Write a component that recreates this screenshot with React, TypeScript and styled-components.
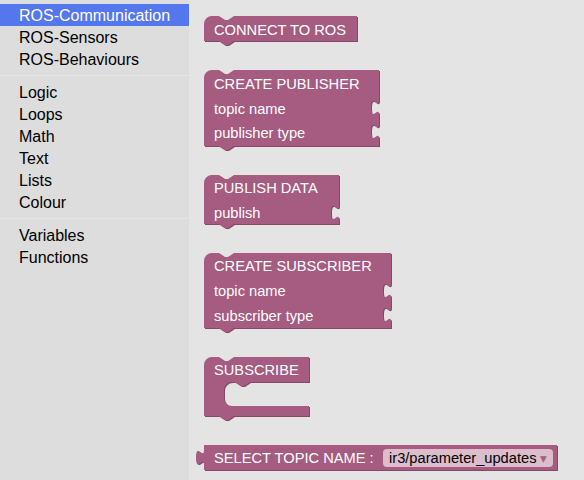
import React from 'react'
import styled, { createGlobalStyle } from 'styled-components'

const GlobalStyle = createGlobalStyle`
  html, body {
    margin: 0;
    padding: 0;
    background: #e4e4e4;
  }
  body {
    font-family: 'Liberation Sans', Arial, sans-serif;
  }
`

const BLOCK_COLOUR = '#a65b80'
const BLOCK_DARK = '#844966'

const Page = styled.div`
  display: flex;
  width: 584px;
  height: 480px;
  overflow: hidden;
`

const Toolbox = styled.div`
  width: 189px;
  flex-shrink: 0;
  background: #ddd;
  padding-top: 4px;
  box-sizing: border-box;
`

const TreeRow = styled.div<{ $selected?: boolean }>`
  height: 22px;
  line-height: 24px;
  overflow: hidden;
  padding-left: 19px;
  font-size: 16px;
  white-space: nowrap;
  color: ${(props) => (props.$selected ? '#fff' : '#000')};
  background: ${(props) => (props.$selected ? '#57e' : 'transparent')};
`

const Separator = styled.div`
  height: 0;
  margin: 5px 0;
  border-bottom: 1px solid #e5e5e5;
`

const Flyout = styled.div`
  flex: 1;
  display: flex;
  flex-direction: column;
  align-items: flex-start;
  gap: 29px;
  padding: 16px 0 0 15px;
  background: #e4e4e4;
`

const BlockSvg = styled.svg`
  display: block;
  overflow: visible;
`

const BodyPath = styled.path<{ $dark?: boolean }>`
  fill: ${(props) => (props.$dark ? BLOCK_DARK : BLOCK_COLOUR)};
`

const Label = styled.text`
  font-family: 'Liberation Sans', Arial, sans-serif;
  font-size: 11pt;
  fill: #fff;
`

const FieldRect = styled.rect`
  fill: #dbbdcc;
`

const FieldText = styled.text`
  font-family: 'Liberation Sans', Arial, sans-serif;
  font-size: 11pt;
  fill: #000;
`

const FieldArrow = styled.text`
  font-family: 'DejaVu Sans', sans-serif;
  font-size: 10pt;
  fill: ${BLOCK_COLOUR};
`

// statement block with value inputs cut into the right edge
const stackPath = (w: number, h: number, inputs: number[] = []) => {
  let d = `M 0,8 A 8,8 0 0,1 8,0 H 15 l 6,4 3,0 6,-4 H ${w}`
  inputs.forEach((y) => {
    d += ` V ${y} v 5 c 0,10 -8,-8 -8,7.5 s 8,-2.5 8,7.5`
  })
  d += ` V ${h} H 30 l -6,4 -3,0 -6,-4 H 0 z`
  return d
}

const statementPath = (w: number) =>
  `M 0,8 A 8,8 0 0,1 8,0 H 15 l 6,4 3,0 6,-4 H ${w} V 25 H 46 l -6,4 -3,0 -6,-4 H 28 ` +
  `a 8,8 0 0,0 -8,8 V 41 a 8,8 0 0,0 8,8 H ${w} V 59 H 30 l -6,4 -3,0 -6,-4 H 0 z`

const outputPath = (w: number, h: number) =>
  `M 0,0 H ${w} V ${h} H 0 V 20 c 0,-10 -8,8 -8,-7.5 s 8,2.5 8,-7.5 z`

interface BlockProps {
  w: number
  h: number
  d: string
  children?: React.ReactNode
}

const Block: React.FC<BlockProps> = ({ w, h, d, children }) => (
  <BlockSvg width={w + 1} height={h}>
    <BodyPath $dark d={d} transform="translate(1,1)" />
    <BodyPath d={d} />
    {children}
  </BlockSvg>
)

const categories = [
  ['ROS-Communication', 'ROS-Sensors', 'ROS-Behaviours'],
  ['Logic', 'Loops', 'Math', 'Text', 'Lists', 'Colour'],
  ['Variables', 'Functions']
]

const App: React.FC = () => {
  return (
    <>
      <GlobalStyle />
      <Page>
        <Toolbox>
          {categories.map((group, gi) => (
            <React.Fragment key={gi}>
              {gi > 0 && <Separator />}
              {group.map((name) => (
                <TreeRow key={name} $selected={name === 'ROS-Communication'}>
                  {name}
                </TreeRow>
              ))}
            </React.Fragment>
          ))}
        </Toolbox>
        <Flyout>
          <Block w={153} h={25} d={stackPath(153, 25)}>
            <Label x={10} y={19}>CONNECT TO ROS</Label>
          </Block>

          <Block w={175} h={76} d={stackPath(175, 76, [25, 49])}>
            <Label x={10} y={19}>CREATE PUBLISHER</Label>
            <Label x={10} y={44}>topic name</Label>
            <Label x={10} y={68}>publisher type</Label>
          </Block>

          <Block w={135} h={49} d={stackPath(135, 49, [25])}>
            <Label x={10} y={18}>PUBLISH DATA</Label>
            <Label x={10} y={43}>publish</Label>
          </Block>

          <Block w={187} h={75} d={stackPath(187, 75, [25, 49])}>
            <Label x={10} y={18}>CREATE SUBSCRIBER</Label>
            <Label x={10} y={43}>topic name</Label>
            <Label x={10} y={68}>subscriber type</Label>
          </Block>

          <Block w={105} h={59} d={statementPath(105)}>
            <Label x={10} y={18}>SUBSCRIBE</Label>
          </Block>

          <Block w={353} h={25} d={outputPath(353, 25)}>
            <Label x={10} y={18}>SELECT TOPIC NAME :</Label>
            <FieldRect x={179} y={4} width={170} height={18} rx={4} ry={4} />
            <FieldText x={185} y={18}>ir3/parameter_updates</FieldText>
            <FieldArrow x={336} y={18}>▾</FieldArrow>
          </Block>
        </Flyout>
      </Page>
    </>
  )
}

export default App
